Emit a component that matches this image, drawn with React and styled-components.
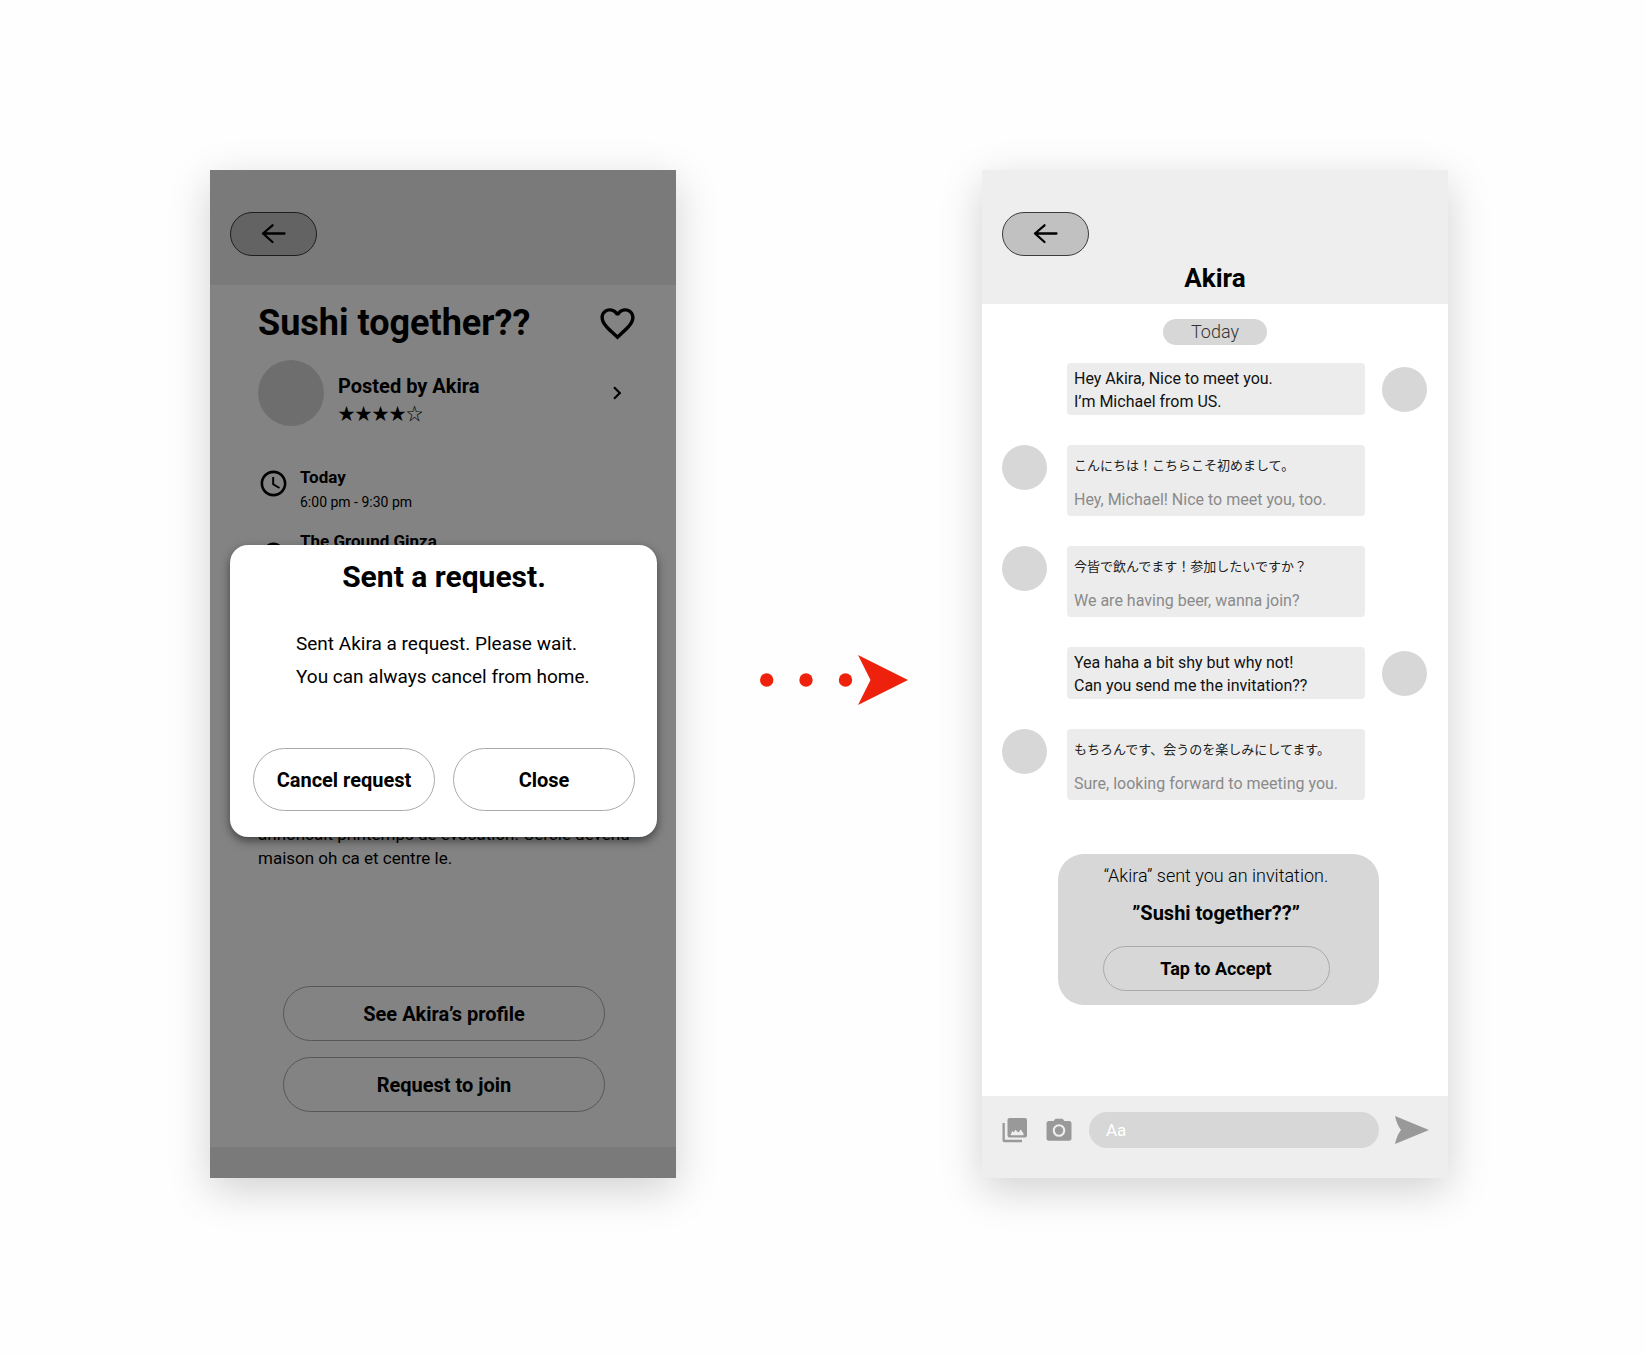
import React from "react";
import styled, { createGlobalStyle, css } from "styled-components";
import { MdFavoriteBorder, MdAccessTime, MdOutlinePlace, MdChevronRight } from "react-icons/md";

const GlobalStyle = createGlobalStyle`
  *, *::before, *::after { box-sizing: border-box; }
  body {
    margin: 0;
    background: #fefefe;
    color: #000;
    font-family: Roboto, "Noto Sans CJK JP", sans-serif;
  }
  h1, h2, h3, p { margin: 0; }
  button, input { font: inherit; color: inherit; }
`;

const Stage = styled.main`
  min-height: 100vh;
  display: grid;
  grid-template-columns: minmax(0, 466px) 306px minmax(0, 466px);
  justify-content: center;
  align-content: start;
  align-items: start;
  padding: 170px 24px 40px 36px;
`;

const Phone = styled.section`
  position: relative;
  display: flex;
  flex-direction: column;
  min-height: 1008px;
  background: #fff;
  box-shadow: 0 12px 40px rgba(0, 0, 0, 0.18);
`;

const TopBar = styled.header`
  display: flex;
  flex-direction: column;
  padding: 42px 20px 0;
  height: ${(p) => p.$height}px;
  background: #eee;
`;

const BackButton = styled.button`
  display: grid;
  place-items: center;
  width: 87px;
  height: 44px;
  flex: none;
  padding: 0;
  border: 1px solid #3c3c3c;
  border-radius: 22px;
  background: #c1c1c1;
  cursor: pointer;
`;

const ContactName = styled.h1`
  padding-top: 7px;
  font-size: 26px;
  line-height: 30px;
  font-weight: 700;
  text-align: center;
`;

const Listing = styled.div`
  flex: 1;
  display: flex;
  flex-direction: column;
  padding: 16px 38px 35px 48px;
`;

const TitleRow = styled.div`
  display: flex;
  justify-content: space-between;
  align-items: center;
`;

const Title = styled.h1`
  font-size: 36px;
  line-height: 44px;
  font-weight: 700;
`;

const IconButton = styled.button`
  display: grid;
  place-items: center;
  padding: 0;
  border: 0;
  background: none;
  cursor: pointer;
`;

const HostLink = styled.a`
  display: flex;
  align-items: center;
  margin-top: 15px;
  padding-right: 8px;
  color: inherit;
  text-decoration: none;
`;

const Avatar = styled.div`
  flex: none;
  width: ${(p) => p.$size}px;
  height: ${(p) => p.$size}px;
  border-radius: 50%;
  background: #d7d7d7;
`;

const HostText = styled.div`
  flex: 1;
  padding: 12px 0 0 14px;
`;

const HostName = styled.h2`
  font-size: 20px;
  line-height: 28px;
  font-weight: 700;
`;

const Stars = styled.p`
  font-family: "Noto Sans CJK JP", sans-serif;
  font-size: 17px;
  line-height: 26px;
`;

const Details = styled.div`
  display: flex;
  flex-direction: column;
  gap: 13px;
  padding-top: 39px;
`;

const Detail = styled.div`
  display: flex;
  gap: 11px;
`;

const DetailIcon = styled.span`
  display: flex;
  padding-top: ${(p) => p.$drop}px;
`;

const DetailName = styled.h3`
  font-size: 17px;
  line-height: 24px;
  font-weight: 700;
`;

const DetailNote = styled.p`
  font-size: 14px;
  line-height: 27px;
`;

const Description = styled.p`
  margin-top: auto;
  font-size: 17px;
  line-height: 24px;
`;

const Actions = styled.div`
  display: flex;
  flex-direction: column;
  gap: 16px;
  padding: 116px 33px 0 25px;
`;

const PillButton = styled.button`
  flex: 1 1 auto;
  min-width: 0;
  height: ${(p) => p.$height}px;
  padding: 0;
  border: 1px solid #aaa;
  border-radius: 32px;
  background: transparent;
  font-size: ${(p) => p.$font || 20}px;
  font-weight: 700;
  cursor: pointer;
`;

const BottomBar = styled.div`
  height: 31px;
  background: #eee;
`;

const Scrim = styled.div`
  position: absolute;
  inset: 0;
  padding: 375px 19px 0 20px;
  background: rgba(0, 0, 0, 0.487);
`;

const Dialog = styled.div`
  display: flex;
  flex-direction: column;
  padding: 14px 22px 26px 23px;
  border-radius: 18px;
  background: #fff;
  box-shadow: 0 4px 10px rgba(0, 0, 0, 0.5);
`;

const DialogTitle = styled.h2`
  font-size: 30px;
  line-height: 36px;
  font-weight: 700;
  text-align: center;
`;

const DialogText = styled.p`
  padding: 32px 0 55px 43px;
  font-size: 19px;
  line-height: 33px;
`;

const DialogActions = styled.div`
  display: grid;
  grid-template-columns: 1fr 1fr;
  gap: 18px;
`;

const Connector = styled.div`
  align-self: center;
  display: flex;
  justify-content: center;
  padding: 11px 0 0 9px;
`;

const Chat = styled.div`
  flex: 1;
  display: flex;
  flex-direction: column;
  padding: 15px 20px 0;
`;

const DayPill = styled.p`
  align-self: center;
  width: 104px;
  border-radius: 13px;
  background: #d7d7d7;
  color: #333;
  font-size: 18px;
  line-height: 26px;
  font-weight: 300;
  text-align: center;
`;

const Messages = styled.div`
  display: flex;
  flex-direction: column;
  gap: 30px;
  padding-top: 18px;
`;

const MessageRow = styled.article`
  display: flex;
  ${(p) =>
    p.$mine
      ? css`
          align-items: center;
          gap: 17px;
          padding: 0 1px 0 65px;
        `
      : css`
          align-items: flex-start;
          gap: 20px;
          padding-right: 63px;
        `}
`;

const Bubble = styled.div`
  flex: 1;
  min-width: 0;
  padding: ${(p) => (p.$mine ? "4px 7px 2px" : "9px 7px 5px")};
  border-radius: 4px;
  background: #ececec;
`;

const Line = styled.p`
  font-size: 16px;
  line-height: 23px;
  color: ${(p) => (p.$translated ? "#8a8a8a" : "#111")};
  padding-top: ${(p) => (p.$translated ? 12 : 0)}px;
`;

const JapaneseLine = styled.p`
  font-family: "Noto Sans CJK JP", sans-serif;
  font-size: 13px;
  line-height: 22px;
  color: #222;
`;

const Invite = styled.section`
  display: flex;
  flex-direction: column;
  align-items: center;
  margin: 54px 49px 0 56px;
  padding: 11px 5px 14px 0;
  border-radius: 26px;
  background: #d7d7d7;
`;

const InviteLead = styled.p`
  font-size: 18px;
  line-height: 22px;
  font-weight: 300;
`;

const InviteTitle = styled.h2`
  padding: 12px 0 19px;
  font-size: 20px;
  line-height: 28px;
  font-weight: 700;
`;

const InviteAction = styled.div`
  display: flex;
  width: 227px;
`;

const Composer = styled.form`
  display: flex;
  align-items: center;
  padding: 16px 19px 30px 18px;
  background: #eee;
`;

const MediaButtons = styled.div`
  display: flex;
  gap: 14px;
  padding-right: 15px;
`;

const MessageInput = styled.input`
  flex: 1;
  min-width: 0;
  height: 36px;
  margin-right: 16px;
  padding: 0 17px;
  border: 0;
  border-radius: 18px;
  background: #d7d7d7;
  font-size: 17px;
  &::placeholder { color: #fff; opacity: 1; }
`;

const BackArrow = () => (
  <svg width="26" height="22" viewBox="0 0 26 22" fill="none" stroke="#000" strokeWidth="2.300" strokeLinecap="round" strokeLinejoin="round" aria-hidden="true">
    <path d="M23.500 10.500H2M11.500 2.300L2 10.500l9.500 8.500" />
  </svg>
);

const GalleryIcon = () => (
  <svg width="30" height="30" viewBox="0 0 30 30" fill="#999" aria-hidden="true">
    <path fillRule="evenodd" d="M9.500 3H25a2 2 0 0 1 2 2V20.500a2 2 0 0 1-2 2H9.500a2 2 0 0 1-2-2V5a2 2 0 0 1 2-2ZM10.500 20.200H23.500V18.500L20.800 14.500L18.300 17.500L15.500 14.800L13.800 17.300L12.200 16Z" />
    <path d="M2.500 8H4.800V24.700H22V27.200H4.500a2 2 0 0 1-2-2Z" />
  </svg>
);

const CameraIcon = () => (
  <svg width="30" height="30" viewBox="0 0 30 30" fill="#999" aria-hidden="true">
    <circle cx="15" cy="15.500" r="4.200" />
    <path fillRule="evenodd" d="M11.500 3.700L9.500 6H5a2.500 2.500 0 0 0-2.500 2.500V23.200a2.500 2.500 0 0 0 2.500 2.500H25a2.500 2.500 0 0 0 2.500-2.500V8.500A2.500 2.500 0 0 0 25 6H20.500L18.500 3.700ZM15 9.200a6.300 6.300 0 1 1 0 12.600a6.300 6.300 0 1 1 0-12.600Z" />
  </svg>
);

const SendIcon = () => (
  <svg width="34" height="28" viewBox="0 0 34 28" fill="#999" aria-hidden="true">
    <path d="M0 0L34 14L0 28Q2 19 6 14Q2 9 0 0Z" />
  </svg>
);

const messages = [
  { mine: true, lines: ["Hey Akira, Nice to meet you.", "I’m Michael from US."] },
  { ja: "こんにちは！こちらこそ初めまして。", en: "Hey, Michael! Nice to meet you, too." },
  { ja: "今皆で飲んでます！参加したいですか？", en: "We are having beer, wanna join?" },
  { mine: true, lines: ["Yea haha a bit shy but why not!", "Can you send me the invitation??"] },
  { ja: "もちろんです、会うのを楽しみにしてます。", en: "Sure, looking forward to meeting you." },
];

function Message({ message }) {
  if (message.mine) {
    return (
      <MessageRow $mine>
        <Bubble $mine>
          {message.lines.map((line) => (
            <Line key={line}>{line}</Line>
          ))}
        </Bubble>
        <Avatar $size={45} />
      </MessageRow>
    );
  }
  return (
    <MessageRow>
      <Avatar $size={45} />
      <Bubble>
        <JapaneseLine lang="ja">{message.ja}</JapaneseLine>
        <Line $translated>{message.en}</Line>
      </Bubble>
    </MessageRow>
  );
}

function RequestScreen() {
  return (
    <Phone>
      <TopBar $height={115}>
        <BackButton type="button" aria-label="Back">
          <BackArrow />
        </BackButton>
      </TopBar>
      <Listing>
        <TitleRow>
          <Title>Sushi together??</Title>
          <IconButton type="button" aria-label="Save">
            <MdFavoriteBorder size={41} />
          </IconButton>
        </TitleRow>
        <HostLink href="#akira">
          <Avatar $size={66} />
          <HostText>
            <HostName>Posted by Akira</HostName>
            <Stars>★★★★☆</Stars>
          </HostText>
          <MdChevronRight size={26} />
        </HostLink>
        <Details>
          <Detail>
            <DetailIcon $drop={3}>
              <MdAccessTime size={31} />
            </DetailIcon>
            <div>
              <DetailName>Today</DetailName>
              <DetailNote>6:00 pm - 9:30 pm</DetailNote>
            </div>
          </Detail>
          <Detail>
            <DetailIcon $drop={11}>
              <MdOutlinePlace size={31} />
            </DetailIcon>
            <DetailName>The Ground Ginza</DetailName>
          </Detail>
        </Details>
        <Description>annoncait printemps de evocation. Cercle devenu maison oh ca et centre le.</Description>
        <Actions>
          <PillButton type="button" $height={55}>See Akira’s profile</PillButton>
          <PillButton type="button" $height={55}>Request to join</PillButton>
        </Actions>
      </Listing>
      <BottomBar />
      <Scrim>
        <Dialog role="dialog" aria-labelledby="dialog-title">
          <DialogTitle id="dialog-title">Sent a request.</DialogTitle>
          <DialogText>
            Sent Akira a request. Please wait.
            <br />
            You can always cancel from home.
          </DialogText>
          <DialogActions>
            <PillButton type="button" $height={63}>Cancel request</PillButton>
            <PillButton type="button" $height={63}>Close</PillButton>
          </DialogActions>
        </Dialog>
      </Scrim>
    </Phone>
  );
}

function ChatScreen() {
  return (
    <Phone>
      <TopBar $height={134}>
        <BackButton type="button" aria-label="Back">
          <BackArrow />
        </BackButton>
        <ContactName>Akira</ContactName>
      </TopBar>
      <Chat>
        <DayPill>Today</DayPill>
        <Messages>
          {messages.map((message, i) => (
            <Message key={i} message={message} />
          ))}
        </Messages>
        <Invite>
          <InviteLead>“Akira” sent you an invitation.</InviteLead>
          <InviteTitle>”Sushi together??”</InviteTitle>
          <InviteAction>
            <PillButton type="button" $height={45} $font={18}>Tap to Accept</PillButton>
          </InviteAction>
        </Invite>
      </Chat>
      <Composer onSubmit={(e) => e.preventDefault()}>
        <MediaButtons>
          <IconButton type="button" aria-label="Gallery">
            <GalleryIcon />
          </IconButton>
          <IconButton type="button" aria-label="Camera">
            <CameraIcon />
          </IconButton>
        </MediaButtons>
        <MessageInput type="text" aria-label="Message" placeholder="Aa" />
        <IconButton type="submit" aria-label="Send">
          <SendIcon />
        </IconButton>
      </Composer>
    </Phone>
  );
}

export default function App() {
  return (
    <>
      <GlobalStyle />
      <Stage>
        <RequestScreen />
        <Connector>
          <svg width="148" height="50" viewBox="0 0 148 50" fill="#ee220c" role="img" aria-label="leads to">
            <circle cx="6.700" cy="25" r="6.700" />
            <circle cx="46" cy="25" r="6.700" />
            <circle cx="85.500" cy="25" r="6.700" />
            <path d="M98 0L148 25L98 50L110.500 25Z" />
          </svg>
        </Connector>
        <ChatScreen />
      </Stage>
    </>
  );
}
